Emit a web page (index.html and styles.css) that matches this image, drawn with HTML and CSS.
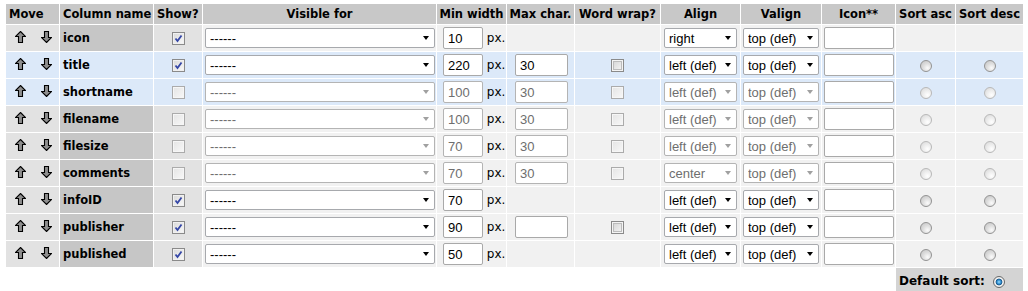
FILE: index.html
```html
<!DOCTYPE html>
<html>
<head>
  <meta charset="utf-8">
  <link rel="stylesheet" href="styles.css">
</head>
<body>

<table class="cols">
  <colgroup>
    <col style="width:53px"><col style="width:93px"><col style="width:48px"><col style="width:233px">
    <col style="width:69px"><col style="width:67px"><col style="width:85px"><col style="width:79px">
    <col style="width:80px"><col style="width:73px"><col style="width:59px"><col style="width:67px">
  </colgroup>
  <tr>
    <th class="left">Move</th>
    <th class="left">Column name</th>
    <th class="left">Show?</th>
    <th>Visible for</th>
    <th>Min width</th>
    <th>Max char.</th>
    <th>Word wrap?</th>
    <th>Align</th>
    <th>Valign</th>
    <th>Icon**</th>
    <th>Sort asc</th>
    <th>Sort desc</th>
  </tr>

  <!-- icon -->
  <tr>
    <td class="mv"><svg class="arr" viewBox="0 0 11 12"><path d="M5.5 .5 10.5 5.5H7.5V11.5H3.5V5.5H.5Z"/></svg><svg class="arr" viewBox="0 0 11 12"><path d="M5.5 11.5 10.5 6.5H7.5V.5H3.5V6.5H.5Z"/></svg></td>
    <td class="nm">icon</td>
    <td class="sh"><span class="cb on"><svg viewBox="0 0 11 11"><path d="M2.5 5.5 4.5 8 8.5 2.5"/></svg></span></td>
    <td class="vis"><span class="sel w-vis"><select><option>------</option></select></span></td>
    <td class="minw"><input class="txt w-min" value="10"> px.</td>
    <td></td>
    <td></td>
    <td class="al"><span class="sel w-al"><select><option>right</option></select></span></td>
    <td class="va"><span class="sel w-va"><select><option>top (def)</option></select></span></td>
    <td class="ic"><input class="txt w-ic"></td>
    <td></td>
    <td></td>
  </tr>

  <!-- title -->
  <tr class="hl">
    <td class="mv"><svg class="arr" viewBox="0 0 11 12"><path d="M5.5 .5 10.5 5.5H7.5V11.5H3.5V5.5H.5Z"/></svg><svg class="arr" viewBox="0 0 11 12"><path d="M5.5 11.5 10.5 6.5H7.5V.5H3.5V6.5H.5Z"/></svg></td>
    <td class="nm">title</td>
    <td class="sh"><span class="cb on"><svg viewBox="0 0 11 11"><path d="M2.5 5.5 4.5 8 8.5 2.5"/></svg></span></td>
    <td class="vis"><span class="sel w-vis"><select><option>------</option></select></span></td>
    <td class="minw"><input class="txt w-min" value="220"> px.</td>
    <td class="maxc"><input class="txt w-max" value="30"></td>
    <td><span class="cb"></span></td>
    <td class="al"><span class="sel w-al"><select><option>left (def)</option></select></span></td>
    <td class="va"><span class="sel w-va"><select><option>top (def)</option></select></span></td>
    <td class="ic"><input class="txt w-ic"></td>
    <td><span class="rd"></span></td>
    <td><span class="rd"></span></td>
  </tr>

  <!-- shortname -->
  <tr class="hl">
    <td class="mv"><svg class="arr" viewBox="0 0 11 12"><path d="M5.5 .5 10.5 5.5H7.5V11.5H3.5V5.5H.5Z"/></svg><svg class="arr" viewBox="0 0 11 12"><path d="M5.5 11.5 10.5 6.5H7.5V.5H3.5V6.5H.5Z"/></svg></td>
    <td class="nm">shortname</td>
    <td class="sh"><span class="cb off"></span></td>
    <td class="vis"><span class="sel w-vis off"><select disabled><option>------</option></select></span></td>
    <td class="minw"><input class="txt w-min" value="100" disabled> px.</td>
    <td class="maxc"><input class="txt w-max" value="30" disabled></td>
    <td><span class="cb off"></span></td>
    <td class="al"><span class="sel w-al off"><select disabled><option>left (def)</option></select></span></td>
    <td class="va"><span class="sel w-va off"><select disabled><option>top (def)</option></select></span></td>
    <td class="ic"><input class="txt w-ic"></td>
    <td><span class="rd off"></span></td>
    <td><span class="rd off"></span></td>
  </tr>

  <!-- filename -->
  <tr>
    <td class="mv"><svg class="arr" viewBox="0 0 11 12"><path d="M5.5 .5 10.5 5.5H7.5V11.5H3.5V5.5H.5Z"/></svg><svg class="arr" viewBox="0 0 11 12"><path d="M5.5 11.5 10.5 6.5H7.5V.5H3.5V6.5H.5Z"/></svg></td>
    <td class="nm">filename</td>
    <td class="sh"><span class="cb off"></span></td>
    <td class="vis"><span class="sel w-vis off"><select disabled><option>------</option></select></span></td>
    <td class="minw"><input class="txt w-min" value="100" disabled> px.</td>
    <td class="maxc"><input class="txt w-max" value="30" disabled></td>
    <td><span class="cb off"></span></td>
    <td class="al"><span class="sel w-al off"><select disabled><option>left (def)</option></select></span></td>
    <td class="va"><span class="sel w-va off"><select disabled><option>top (def)</option></select></span></td>
    <td class="ic"><input class="txt w-ic"></td>
    <td><span class="rd off"></span></td>
    <td><span class="rd off"></span></td>
  </tr>

  <!-- filesize -->
  <tr>
    <td class="mv"><svg class="arr" viewBox="0 0 11 12"><path d="M5.5 .5 10.5 5.5H7.5V11.5H3.5V5.5H.5Z"/></svg><svg class="arr" viewBox="0 0 11 12"><path d="M5.5 11.5 10.5 6.5H7.5V.5H3.5V6.5H.5Z"/></svg></td>
    <td class="nm">filesize</td>
    <td class="sh"><span class="cb off"></span></td>
    <td class="vis"><span class="sel w-vis off"><select disabled><option>------</option></select></span></td>
    <td class="minw"><input class="txt w-min" value="70" disabled> px.</td>
    <td class="maxc"><input class="txt w-max" value="30" disabled></td>
    <td><span class="cb off"></span></td>
    <td class="al"><span class="sel w-al off"><select disabled><option>left (def)</option></select></span></td>
    <td class="va"><span class="sel w-va off"><select disabled><option>top (def)</option></select></span></td>
    <td class="ic"><input class="txt w-ic"></td>
    <td><span class="rd off"></span></td>
    <td><span class="rd off"></span></td>
  </tr>

  <!-- comments -->
  <tr>
    <td class="mv"><svg class="arr" viewBox="0 0 11 12"><path d="M5.5 .5 10.5 5.5H7.5V11.5H3.5V5.5H.5Z"/></svg><svg class="arr" viewBox="0 0 11 12"><path d="M5.5 11.5 10.5 6.5H7.5V.5H3.5V6.5H.5Z"/></svg></td>
    <td class="nm">comments</td>
    <td class="sh"><span class="cb off"></span></td>
    <td class="vis"><span class="sel w-vis off"><select disabled><option>------</option></select></span></td>
    <td class="minw"><input class="txt w-min" value="70" disabled> px.</td>
    <td class="maxc"><input class="txt w-max" value="30" disabled></td>
    <td><span class="cb off"></span></td>
    <td class="al"><span class="sel w-al off"><select disabled><option>center</option></select></span></td>
    <td class="va"><span class="sel w-va off"><select disabled><option>top (def)</option></select></span></td>
    <td class="ic"><input class="txt w-ic"></td>
    <td><span class="rd off"></span></td>
    <td><span class="rd off"></span></td>
  </tr>

  <!-- infoID -->
  <tr>
    <td class="mv"><svg class="arr" viewBox="0 0 11 12"><path d="M5.5 .5 10.5 5.5H7.5V11.5H3.5V5.5H.5Z"/></svg><svg class="arr" viewBox="0 0 11 12"><path d="M5.5 11.5 10.5 6.5H7.5V.5H3.5V6.5H.5Z"/></svg></td>
    <td class="nm">infoID</td>
    <td class="sh"><span class="cb on"><svg viewBox="0 0 11 11"><path d="M2.5 5.5 4.5 8 8.5 2.5"/></svg></span></td>
    <td class="vis"><span class="sel w-vis"><select><option>------</option></select></span></td>
    <td class="minw"><input class="txt w-min" value="70"> px.</td>
    <td></td>
    <td></td>
    <td class="al"><span class="sel w-al"><select><option>left (def)</option></select></span></td>
    <td class="va"><span class="sel w-va"><select><option>top (def)</option></select></span></td>
    <td class="ic"><input class="txt w-ic"></td>
    <td><span class="rd"></span></td>
    <td><span class="rd"></span></td>
  </tr>

  <!-- publisher -->
  <tr>
    <td class="mv"><svg class="arr" viewBox="0 0 11 12"><path d="M5.5 .5 10.5 5.5H7.5V11.5H3.5V5.5H.5Z"/></svg><svg class="arr" viewBox="0 0 11 12"><path d="M5.5 11.5 10.5 6.5H7.5V.5H3.5V6.5H.5Z"/></svg></td>
    <td class="nm">publisher</td>
    <td class="sh"><span class="cb on"><svg viewBox="0 0 11 11"><path d="M2.5 5.5 4.5 8 8.5 2.5"/></svg></span></td>
    <td class="vis"><span class="sel w-vis"><select><option>------</option></select></span></td>
    <td class="minw"><input class="txt w-min" value="90"> px.</td>
    <td class="maxc"><input class="txt w-max"></td>
    <td><span class="cb"></span></td>
    <td class="al"><span class="sel w-al"><select><option>left (def)</option></select></span></td>
    <td class="va"><span class="sel w-va"><select><option>top (def)</option></select></span></td>
    <td class="ic"><input class="txt w-ic"></td>
    <td><span class="rd"></span></td>
    <td><span class="rd"></span></td>
  </tr>

  <!-- published -->
  <tr>
    <td class="mv"><svg class="arr" viewBox="0 0 11 12"><path d="M5.5 .5 10.5 5.5H7.5V11.5H3.5V5.5H.5Z"/></svg><svg class="arr" viewBox="0 0 11 12"><path d="M5.5 11.5 10.5 6.5H7.5V.5H3.5V6.5H.5Z"/></svg></td>
    <td class="nm">published</td>
    <td class="sh"><span class="cb on"><svg viewBox="0 0 11 11"><path d="M2.5 5.5 4.5 8 8.5 2.5"/></svg></span></td>
    <td class="vis"><span class="sel w-vis"><select><option>------</option></select></span></td>
    <td class="minw"><input class="txt w-min" value="50"> px.</td>
    <td></td>
    <td></td>
    <td class="al"><span class="sel w-al"><select><option>left (def)</option></select></span></td>
    <td class="va"><span class="sel w-va"><select><option>top (def)</option></select></span></td>
    <td class="ic"><input class="txt w-ic"></td>
    <td><span class="rd"></span></td>
    <td><span class="rd"></span></td>
  </tr>

  <tr class="foot">
    <td colspan="10" class="blank"></td>
    <td colspan="2" class="dsort">Default sort: <span class="rd sel-on"></span></td>
  </tr>
</table>

</body>
</html>
```

FILE: styles.css
```css
body {
  margin: 3px 5px;
  background: #fff;
  color: #000;
  font-family: "DejaVu Sans", Verdana, sans-serif;
  font-size: 11.5px;
}

.cols {
  border-collapse: separate;
  border-spacing: 1px;
  table-layout: fixed;
  width: 1019px;
}

.cols th {
  background: #c8c8c8;
  height: 20px;
  padding: 0;
  font-weight: bold;
  text-align: center;
  white-space: nowrap;
}

.cols th.left {
  text-align: left;
  padding-left: 3px;
}

.cols td {
  height: 26px;
  padding: 0;
  background: #f1f1f1;
  text-align: center;
  white-space: nowrap;
  vertical-align: middle;
}

/* first columns are darker */
.cols td.mv,
.cols td.sh {
  background: #e2e2e2;
}

.cols td.nm {
  background: #c6c6c6;
  font-weight: bold;
  text-align: left;
  padding-left: 3px;
}

/* highlighted rows */
.cols tr.hl td {
  background: #dce9f9;
}

.mv {
  text-align: left !important;
  padding-left: 9px !important;
}

.arr {
  width: 11px;
  height: 12px;
  vertical-align: -1px;
  margin-right: 15px;
  fill: #8e8e8e;
  stroke: #000;
  stroke-width: 1.1;
  stroke-linejoin: miter;
}

/* checkboxes */
.cb {
  display: inline-block;
  box-sizing: border-box;
  width: 13px;
  height: 13px;
  border: 1px solid #8a8a8a;
  background: linear-gradient(135deg, #d2d2d2, #f8f8f8);
  box-shadow: inset 0 0 0 1px #f4f4f4, inset 0 0 0 2px #bcbcbc;
  vertical-align: middle;
}

.cb.on {
  background: linear-gradient(135deg, #d8d8d8, #fafafa);
  box-shadow: inset 0 0 0 1px #f0f0f0;
}

.cb.on svg {
  display: block;
  width: 11px;
  height: 11px;
  fill: none;
  stroke: #3446a6;
  stroke-width: 1.8;
}

.cb.off {
  border-color: #ababab;
  background: linear-gradient(135deg, #e4e4e4, #f8f8f8);
  box-shadow: inset 0 0 0 1px #f6f6f6;
}

/* radios */
.rd {
  display: inline-block;
  box-sizing: border-box;
  width: 12px;
  height: 12px;
  border: 1px solid #939393;
  border-radius: 50%;
  background: radial-gradient(circle at 65% 70%, #fbfbfb 0, #dedede 45%, #c2c2c2 100%);
  vertical-align: middle;
}

.rd.off {
  border-color: #b8b8b8;
  background: radial-gradient(circle at 65% 70%, #fff 0, #ebebeb 50%, #d6d6d6 100%);
}

.rd.sel-on {
  border-color: #6a6a6a;
  background: radial-gradient(circle, #9fe0ff 0, #2d8ccf 28%, #17507e 45%, #f4f4f4 52%, #dcdcdc 100%);
  margin-left: 4px;
}

/* selects */
.sel {
  position: relative;
  display: inline-block;
  vertical-align: middle;
}

.sel select {
  appearance: none;
  -webkit-appearance: none;
  box-sizing: border-box;
  width: 100%;
  height: 20px;
  margin: 0;
  padding: 0 0 0 4px;
  border: 1px solid #a7a9ad;
  border-radius: 2px;
  background: #fff;
  color: #000;
  opacity: 1;
  font-family: "Liberation Sans", Arial, sans-serif;
  font-size: 13px;
}

.sel::after {
  content: "";
  position: absolute;
  right: 6px;
  top: 8px;
  border-left: 3.5px solid transparent;
  border-right: 3.5px solid transparent;
  border-top: 4px solid #000;
}

.sel.off select {
  color: #6e6e6e;
  -webkit-text-fill-color: #6e6e6e;
  border-color: #b4b4b4;
  background: #fff;
  opacity: 1;
}

.sel.off::after {
  border-top-color: #a0a0a0;
}

.w-vis { width: 230px; }
.w-al { width: 73px; }
.w-va { width: 76px; }

.vis { text-align: left !important; padding-left: 2px !important; }
.al { text-align: left !important; padding-left: 3px !important; }
.va { text-align: left !important; padding-left: 2px !important; }
.ic { text-align: left !important; padding-left: 2px !important; }

/* text inputs */
.txt {
  box-sizing: border-box;
  height: 22px;
  margin: 0;
  padding: 0 0 0 4px;
  border: 1px solid #a9a9a9;
  border-radius: 2px;
  background: #fff;
  color: #000;
  font-family: "Liberation Sans", Arial, sans-serif;
  font-size: 13px;
  vertical-align: middle;
}

.txt:disabled {
  color: #6e6e6e;
  -webkit-text-fill-color: #6e6e6e;
  border-color: #b4b4b4;
  background: #fff;
  opacity: 1;
}

.w-min { width: 40px; }
.w-max { width: 53px; }
.w-ic { width: 70px; }

.minw {
  text-align: left !important;
  padding-left: 6px !important;
  font-size: 12px;
}

.maxc {
  text-align: left !important;
  padding-left: 8px !important;
}

/* default sort row */
.cols td.blank {
  background: #fff;
}

.cols td.dsort {
  background: #d4d4d4;
  text-align: left;
  padding-left: 3px;
  font-weight: bold;
  font-size: 12px;
}
```
